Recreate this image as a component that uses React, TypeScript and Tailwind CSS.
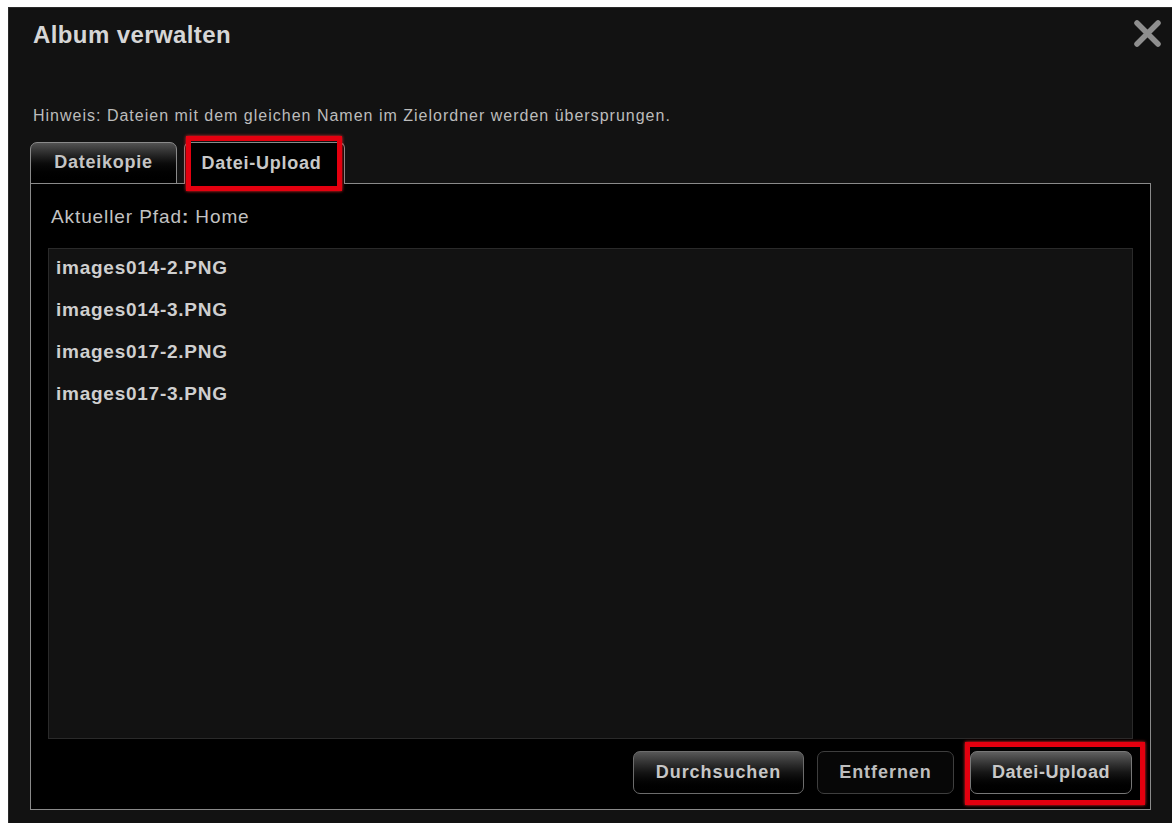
import { FC } from 'react'

const files = ['images014-2.PNG', 'images014-3.PNG', 'images017-2.PNG', 'images017-3.PNG']

const CloseIcon: FC = () => (
  <svg width="29" height="29" viewBox="0 0 29 29" className="shrink-0">
    <path d="M4 4 L25 25 M25 4 L4 25" stroke="#8e8e8e" strokeWidth="5.5" strokeLinecap="round" />
  </svg>
)

const App: FC = () => {
  return (
    <div className="w-[1176px] h-[823px] overflow-hidden bg-white pt-[7px] pl-[8px] pr-[4px] font-['Liberation_Sans',Arial,sans-serif]">
      <div className="h-[816px] bg-[#121212] border-t border-l border-[#2a2a2a]">
        {/* header */}
        <div className="flex items-start justify-between pl-[24px] pr-[10px] pt-[11px]">
          <h1 className="mt-[2px] text-[24px] leading-[28px] font-bold text-[#d6d6d6] tracking-[0.4px]">
            Album verwalten
          </h1>
          <CloseIcon />
        </div>

        <div className="px-[21px]">
          <p className="mt-[57px] pl-[3px] text-[16px] leading-[20px] text-[#bcbcbc] tracking-[1px]">
            Hinweis: Dateien mit dem gleichen Namen im Zielordner werden übersprungen.
          </p>

          {/* tabs */}
          <div className="relative z-10 mt-[16px] -mb-px flex items-end">
            <div className="flex h-[42px] w-[147px] items-center justify-center rounded-t-[7px] border border-[#8a8a8a] bg-gradient-to-b from-[#525252] via-[#0c0c0c] to-black pb-[2px] text-[18px] font-bold text-[#c4c4c4] tracking-[0.75px]">
              Dateikopie
            </div>
            <div className="relative ml-[7px] flex h-[42px] w-[161px] items-center justify-center rounded-t-[6px] border border-b-0 border-[#8a8a8a] bg-black pr-[6px] text-[18px] font-bold text-[#c8c8c8] tracking-[0.75px]">
              Datei-Upload
              <div className="absolute left-[1px] right-[2px] top-[-7px] bottom-[-7px] border-[5px] border-[#e4000f] shadow-[0_0_3px_#ff2a2a]" />
            </div>
          </div>

          {/* panel */}
          <div className="flex h-[627px] flex-col border border-[#8a8a8a] bg-black">
            <div className="pl-[20px] pt-[21px] text-[19px] leading-[24px] text-[#c2c2c2] tracking-[0.9px]">
              Aktueller Pfad<span className="font-bold">:</span> Home
            </div>

            <div className="mx-[17px] mt-[19px] flex h-[491px] flex-col gap-[18px] border border-[#2a2a2a] bg-[#121212] pl-[7px] pt-[7px]">
              {files.map((f) => (
                <div key={f} className="text-[19px] leading-[24px] font-bold text-[#cfcfcf] tracking-[0.75px]">
                  {f}
                </div>
              ))}
            </div>

            <div className="mt-[12px] flex justify-end pr-[18px]">
              <button className="flex h-[43px] w-[171px] items-center justify-center rounded-[7px] border border-[#6c6c6c] bg-gradient-to-b from-[#575757] via-[#141414] to-black text-[18px] font-bold text-[#c6c6c6] tracking-[0.95px]">
                Durchsuchen
              </button>
              <button className="ml-[13px] flex h-[43px] w-[137px] items-center justify-center rounded-[7px] border border-[#3e3e3e] bg-[#070707] text-[18px] font-bold text-[#bdbdbd] tracking-[0.95px]">
                Entfernen
              </button>
              <div className="relative ml-[16px]">
                <button className="flex h-[43px] w-[162px] items-center justify-center rounded-[7px] border border-[#777] bg-gradient-to-b from-[#606060] via-[#161616] to-black text-[18px] font-bold text-[#c8c8c8] tracking-[0.6px]">
                  Datei-Upload
                </button>
                <div className="absolute left-[-5px] right-[-13px] top-[-9px] bottom-[-11px] border-[5px] border-[#e4000f] shadow-[0_0_3px_#ff2a2a]" />
              </div>
            </div>
          </div>
        </div>
      </div>
    </div>
  )
}

export default App
